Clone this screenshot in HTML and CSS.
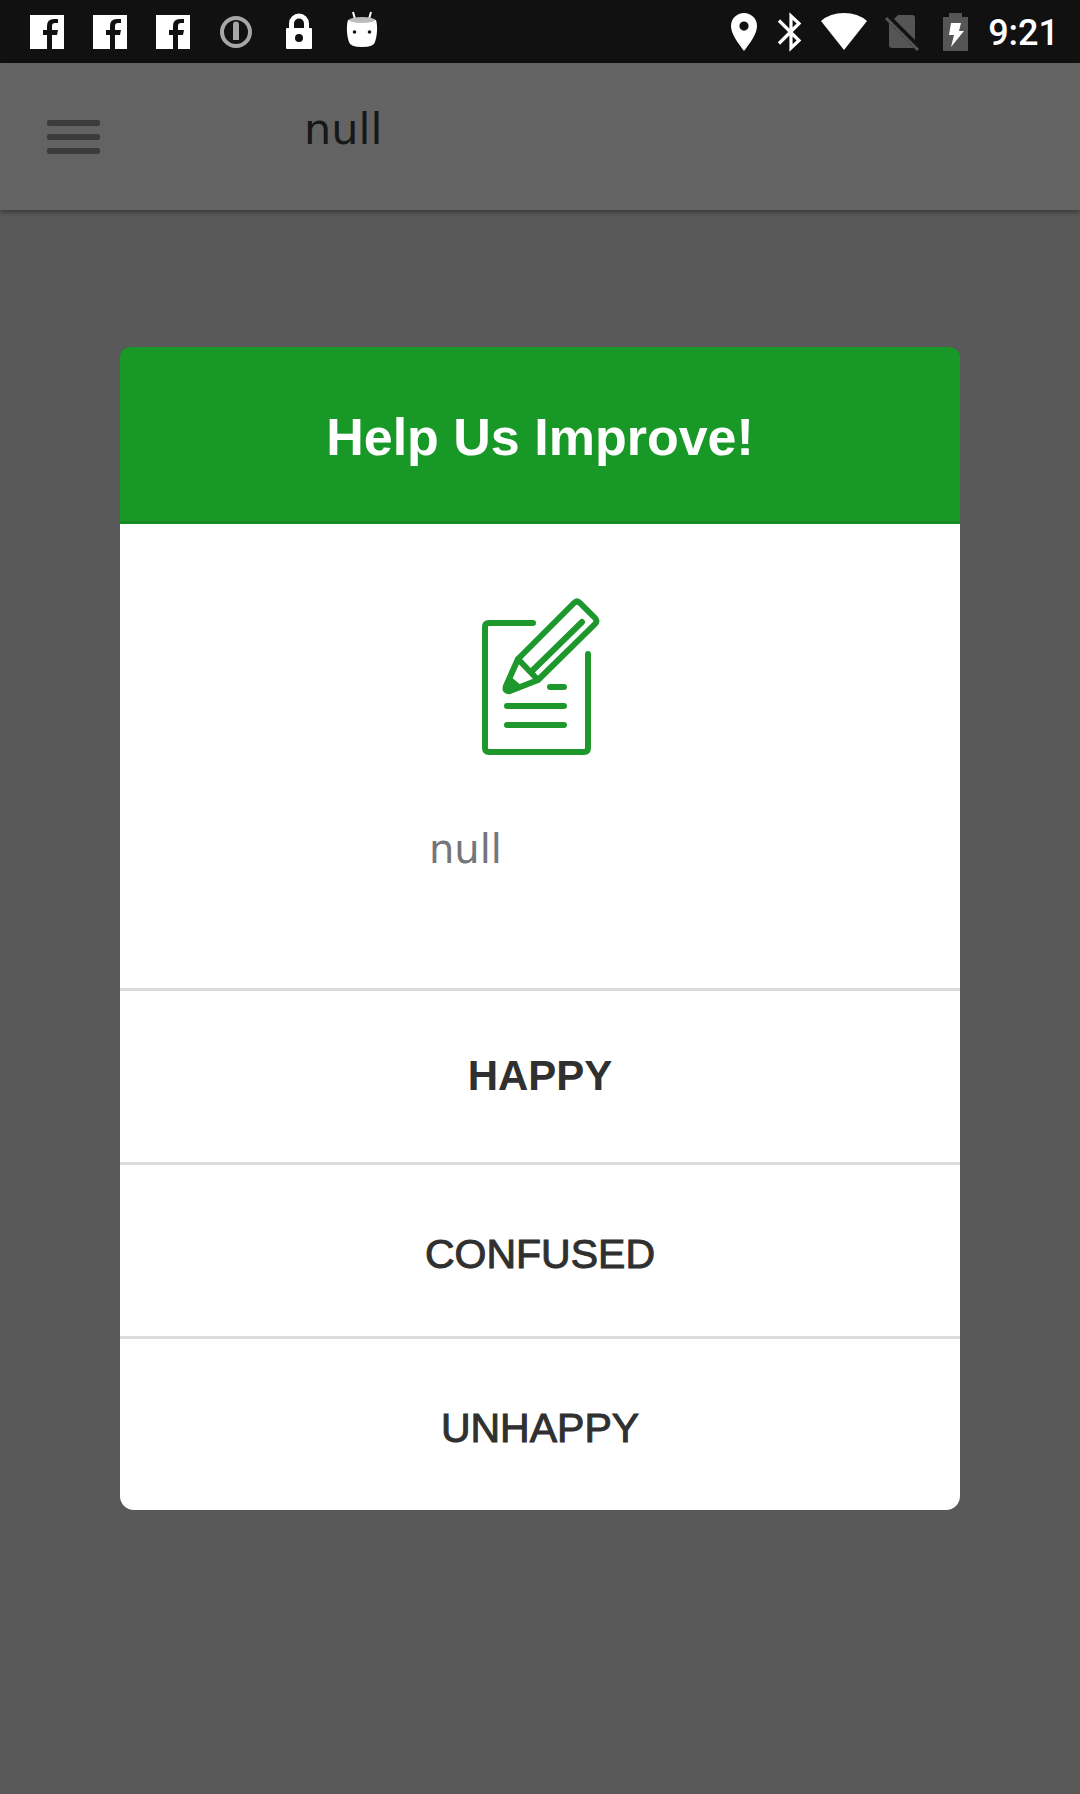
FILE: index.html
```html
<!DOCTYPE html>
<html lang="en">
<head>
<meta charset="utf-8">
<meta name="viewport" content="width=device-width, initial-scale=1">
<title>Help Us Improve!</title>
<link rel="stylesheet" href="styles.css">
</head>
<body>
<div class="screen">
  <div class="status-bar">
    <div class="notifications">
      <svg class="icon" width="36" height="36" viewBox="0 0 36 36"><path fill="#fff" d="M1 1h34v34H23V21h5l1-5h-6v-4q0-3 3-3h3V5h-4q-7 0-7 7v4h-4v5h4v14H1z"/></svg>
      <svg class="icon" width="36" height="36" viewBox="0 0 36 36"><path fill="#fff" d="M1 1h34v34H23V21h5l1-5h-6v-4q0-3 3-3h3V5h-4q-7 0-7 7v4h-4v5h4v14H1z"/></svg>
      <svg class="icon" width="36" height="36" viewBox="0 0 36 36"><path fill="#fff" d="M1 1h34v34H23V21h5l1-5h-6v-4q0-3 3-3h3V5h-4q-7 0-7 7v4h-4v5h4v14H1z"/></svg>
      <svg class="icon" width="36" height="36" viewBox="0 0 36 36"><circle cx="18" cy="18" r="14" fill="none" stroke="#a6a6a6" stroke-width="4"/><path d="M18 10v16" stroke="#a6a6a6" stroke-width="6"/><circle cx="18" cy="10.500" r="3" fill="#a6a6a6"/></svg>
      <svg class="icon" width="36" height="36" viewBox="0 0 36 36"><path d="M10.500 15V9.500a7.500 7.500 0 0 1 15 0V15" fill="none" stroke="#fff" stroke-width="5"/><rect x="5" y="14" width="26" height="21" rx="1" fill="#fff"/><circle cx="18" cy="24" r="4" fill="#111"/></svg>
      <svg class="icon" width="36" height="36" viewBox="0 0 36 36"><path d="M9-2l2 7M27-2l-2 7" stroke="#fff" stroke-width="2"/><path fill="#fff" d="M4 6q14-4 28 0c2 6 1 17-1 22q-1 5-13 5T5 28C3 23 2 12 4 6z"/><ellipse cx="18" cy="6" rx="13" ry="3" fill="#bbb"/><circle cx="10.500" cy="18" r="1.800" fill="#111"/><circle cx="25.500" cy="18" r="1.800" fill="#111"/></svg>
    </div>
    <div class="system">
      <svg class="icon" width="26" height="38" viewBox="0 0 26 38"><path fill="#fff" fill-rule="evenodd" d="M13 0a13 13 0 0 1 13 13c0 8-7 17-13 25C7 30 0 21 0 13A13 13 0 0 1 13 0zm0 8.500a4.600 4.600 0 1 0 0 9.200 4.600 4.600 0 0 0 0-9.200z"/></svg>
      <svg class="icon" width="24" height="38" viewBox="-1 0 24 38"><path d="M1 7.500l20 20-8 7.500V3l8 7.500-20 20" fill="none" stroke="#fff" stroke-width="3.200"/></svg>
      <svg class="icon" width="46" height="38" viewBox="0 0 46 38"><path fill="#fff" d="M0 8Q9 0 23 0t23 8L23 37z"/></svg>
      <svg class="icon" width="36" height="38" viewBox="3 0 36 38"><path fill="#555" d="M10 6l4-4h14q3 0 3 3v22zM5 10l25 25H8q-3 0-3-3z"/><path d="M2 5l32 32" stroke="#555" stroke-width="3"/></svg>
      <svg class="icon" width="25" height="38" viewBox="0 0 25 38"><path fill="#555" d="M6 0h13v4h6v34H0V4h6z"/><path fill="#fff" d="M8 10h10l-2 8h5L8 34l3-12H6z"/></svg>
      <time class="clock">9:21</time>
    </div>
  </div>
  <header class="app-bar">
    <button class="menu" type="button" aria-label="Menu"><span class="menu-line"></span><span class="menu-line"></span><span class="menu-line"></span></button>
    <h1 class="app-title">null</h1>
  </header>
  <main class="backdrop">
    <section class="dialog" role="dialog" aria-labelledby="dialog-title">
      <h2 class="dialog-title" id="dialog-title">Help Us Improve!</h2>
      <div class="dialog-body">
        <svg class="survey" width="120" height="160" viewBox="0 0 120 160" fill="none" stroke="#1e982d" stroke-width="6" stroke-linecap="round" stroke-linejoin="round">
          <path d="M53 26H9q-4 0-4 4v121q0 4 4 4h95q4 0 4-4V57M27 109h57M27 128h57M70 90h14"/>
          <path d="M38 62L94 6q3-3 6 0l15 15q3 3 0 6L58 83zM38 62L26 89q-2 6 4 5l28-11M38 62l20 21M51 75l51-50"/>
          <path fill="#1e982d" stroke="none" d="M30 79l12 10-14 6-4-4z"/>
        </svg>
        <p class="message">null</p>
      </div>
      <button class="choice choice-primary" type="button">HAPPY</button>
      <button class="choice" type="button">CONFUSED</button>
      <button class="choice" type="button">UNHAPPY</button>
    </section>
  </main>
</div>
</body>
</html>
```
FILE: styles.css
```css
* {
  box-sizing: border-box;
}

body {
  margin: 0;
  background: #595959;
  font-family: "Liberation Sans", Arial, sans-serif;
}

h1, h2, p {
  margin: 0;
  font-weight: 400;
}

button {
  border: 0;
  cursor: pointer;
}

.screen {
  display: flex;
  flex-direction: column;
  min-height: 100vh;
}

.status-bar {
  display: flex;
  justify-content: space-between;
  align-items: center;
  height: 63px;
  padding: 0 21px 0 29px;
  background: #111;
}

.notifications {
  display: flex;
  gap: 27px;
}

.system {
  display: flex;
  align-items: center;
  gap: 20px;
}

.icon {
  display: block;
  overflow: visible;
}

.clock {
  padding-top: 2px;
  color: #fff;
  font: 500 36px/40px Roboto, sans-serif;
}

.app-bar {
  display: flex;
  align-items: flex-start;
  height: 147px;
  padding: 41px 47px;
  background: #636363;
  box-shadow: 0 2px 5px rgba(0, 0, 0, 0.4);
}

.menu {
  display: flex;
  flex-direction: column;
  gap: 8px;
  width: 53px;
  padding: 16px 0;
  background: none;
}

.menu-line {
  height: 6px;
  border-radius: 2px;
  background: #3b3b3b;
}

.app-title {
  margin-left: 204px;
  color: #171717;
  font: 43px/50px "DejaVu Sans", sans-serif;
}

.backdrop {
  padding: 137px 120px;
}

.dialog {
  display: flex;
  flex-direction: column;
  overflow: hidden;
  border-radius: 10px 10px 14px 14px;
}

.dialog-title {
  padding: 60px 24px 54px;
  border-bottom: 3px solid #178a23;
  background: #189826;
  color: #fff;
  font-size: 52px;
  font-weight: 700;
  line-height: 60px;
  text-align: center;
}

.dialog-body {
  min-height: 464px;
  padding: 73px 96px;
  background: #fff;
}

.survey {
  display: block;
  margin: 0 auto;
}

.message {
  margin-top: 68px;
  padding-left: 213px;
  color: #75757b;
  font: 40px/48px "DejaVu Sans", sans-serif;
}

.choice {
  height: 174px;
  padding: 6px 24px 0;
  border-top: 3px solid #dcdcdc;
  background: #fff;
  color: #303030;
  font: 41px/48px "Liberation Sans", Arial, sans-serif;
  -webkit-text-stroke: 1px #303030;
}

.choice-primary {
  padding: 0 24px 2px;
  font-size: 42px;
  font-weight: 700;
  -webkit-text-stroke: 0;
}
```
